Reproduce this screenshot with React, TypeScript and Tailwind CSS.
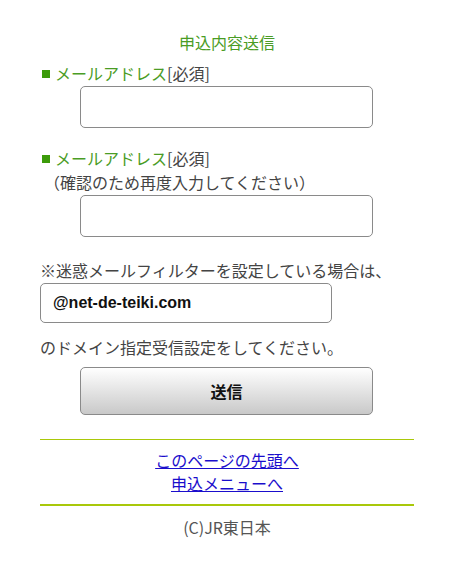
const font = { fontFamily: '"Noto Sans CJK JP", "Noto Sans", sans-serif' };

function Label() {
  return (
    <p className="h-6 text-[16px] leading-6 text-[#444]">
      <span className="ml-[2px] mr-[5px] inline-block h-[8px] w-[8px] bg-[#3c9b0a] align-[2px]" />
      <span className="text-[#4a9c25]">メールアドレス</span>[必須]
    </p>
  );
}

function Field({ className = '' }: { className?: string }) {
  return (
    <input
      type="email"
      className={`ml-[40px] block h-[42px] w-[293px] rounded-[5px] border border-[#8a8a8a] bg-white px-2 ${className}`}
    />
  );
}

export default function App() {
  return (
    <div className="min-h-[569px] bg-white" style={font}>
      <div className="ml-[40px] w-[374px] pt-[30px] text-[#444]">
        <h1 className="h-6 text-center text-[16px] leading-6 text-[#4a9c25]">申込内容送信</h1>

        <div className="mt-[7px]">
          <Label />
          <Field className="mt-[1px]" />
        </div>

        <div className="mt-[18px]">
          <Label />
          <p className="h-6 pl-[4px] text-[16px] leading-6">（確認のため再度入力してください）</p>
          <Field className="mt-[1px]" />
        </div>

        <p className="mt-[21px] h-6 text-[16px] leading-6">※迷惑メールフィルターを設定している場合は、</p>
        <div
          className="mt-[1px] flex h-[40px] w-[292px] items-center rounded-[5px] border border-[#8a8a8a] px-[12px] text-[16px] font-bold text-[#111]"
          style={{ fontFamily: '"Liberation Sans", Arial, sans-serif' }}
        >
          @net-de-teiki.com
        </div>
        <p className="mt-[12px] h-6 text-[16px] leading-6">のドメイン指定受信設定をしてください。</p>

        <button className="ml-[40px] mt-[8px] block h-[48px] w-[293px] rounded-[5px] border border-[#8a8a8a] bg-gradient-to-b from-white to-[#c9c9c9] text-[16px] font-bold text-[#111]">
          送信
        </button>

        <div className="mt-[24px] border-t border-[#a9c80a]" />
        <div className="flex flex-col items-center pt-[9px] pb-[9px] text-[16px] leading-[23px]">
          <a href="#" className="text-[#1a0dcc] underline">このページの先頭へ</a>
          <a href="#" className="text-[#1a0dcc] underline">申込メニューへ</a>
        </div>
        <div className="border-t-2 border-[#a9c80a]" />
        <p className="mt-[9px] text-center text-[16px] leading-6 text-[#555]">(C)JR東日本</p>
      </div>
    </div>
  );
}
